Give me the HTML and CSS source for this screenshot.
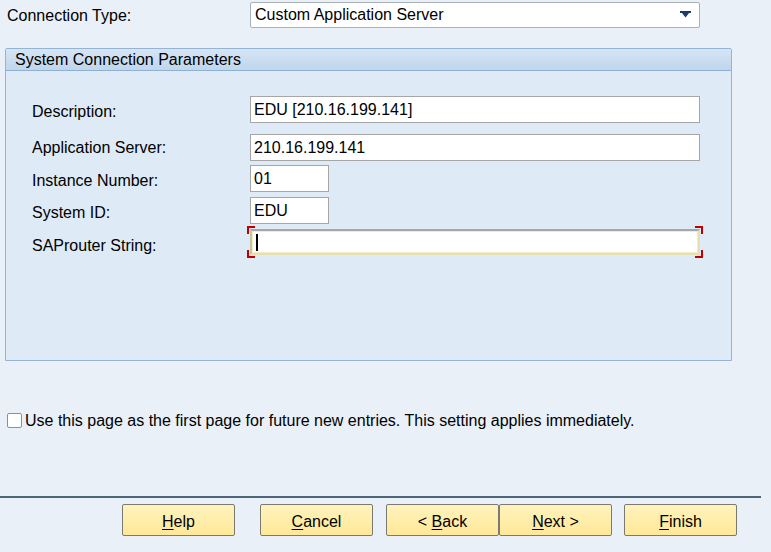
FILE: index.html
```html
<!DOCTYPE html>
<html>
<head>
<meta charset="utf-8">
<link rel="stylesheet" href="styles.css">
</head>
<body>
<div class="page">
  <div class="top-row">
    <span class="top-label">Connection Type:</span>
    <div class="select">
      <span>Custom Application Server</span>
      <svg class="arrow" width="11" height="7" viewBox="0 0 11 7"><path d="M0 0H11V2H9L5.5 6.5L2 2H0Z" fill="#1f3a66"/></svg>
    </div>
  </div>

  <div class="panel">
    <div class="panel-head">System Connection Parameters</div>
    <div class="panel-body">
      <div class="row r1"><span class="lbl down2">Description:</span><div class="field wide">EDU [210.16.199.141]</div></div>
      <div class="row r2"><span class="lbl">Application Server:</span><div class="field wide">210.16.199.141</div></div>
      <div class="row r3"><span class="lbl down2">Instance Number:</span><div class="field short">01</div></div>
      <div class="row r4"><span class="lbl down2">System ID:</span><div class="field short">EDU</div></div>
      <div class="row r5"><span class="lbl down4">SAProuter String:</span>
        <div class="focus-wrap">
          <div class="field wide focused"><span class="caret"></span></div>
          <span class="br tl"></span><span class="br bl"></span><span class="br tr"></span><span class="br brr"></span>
        </div>
      </div>
    </div>
  </div>

  <label class="check-row"><span class="box"></span><span class="check-text">Use this page as the first page for future new entries. This setting applies immediately.</span></label>

  <div class="sep"></div>

  <div class="buttons">
    <div class="btn b-help"><span><u>H</u>elp</span></div>
    <div class="btn b-cancel"><span><u>C</u>ancel</span></div>
    <div class="btn b-back"><span>&lt; <u>B</u>ack</span></div>
    <div class="btn b-next"><span><u>N</u>ext &gt;</span></div>
    <div class="btn b-finish"><span><u>F</u>inish</span></div>
  </div>
</div>
</body>
</html>
```

FILE: styles.css
```css
html, body {
  margin: 0;
  padding: 0;
  background: #e9f0f8;
}
.page {
  width: 771px;
  height: 552px;
  font-family: "Liberation Sans", Arial, sans-serif;
  font-size: 16px;
  color: #000;
  overflow: hidden;
}
.top-row {
  display: flex;
  align-items: center;
  padding: 2px 0 0 7px;
  height: 26px;
}
.top-label {
  width: 243px;
  margin-top: 2px;
}
.select {
  box-sizing: border-box;
  width: 450px;
  height: 26px;
  background: #fff;
  border: 1px solid #a9b0b8;
  border-radius: 2px;
  display: flex;
  align-items: center;
  justify-content: space-between;
  padding: 0 8px 0 4px;
}
.arrow { margin-top: -2px; }

.panel {
  box-sizing: border-box;
  margin: 20px 0 0 5px;
  width: 727px;
  height: 313px;
  border: 1px solid #93b4d4;
  border-radius: 2px 2px 0 0;
  background: #deeaf5;
}
.panel-head {
  height: 21px;
  line-height: 21px;
  padding-left: 9px;
  background: linear-gradient(#d6e5f4, #c0d6ec);
  border-bottom: 1px solid #8fb0d0;
}
.panel-body {
  padding: 25px 0 0 26px;
}
.row {
  display: flex;
  align-items: center;
}
.lbl { width: 218px; }
.down2 { margin-top: 4px; }
.down4 { margin-top: 7px; }
.r2 { margin-top: 11px; }
.r3 { margin-top: 4px; }
.r4 { margin-top: 5px; }
.r5 { margin-top: 5px; }
.field {
  box-sizing: border-box;
  height: 27px;
  background: #fff;
  border: 1px solid #a6a6a6;
  padding: 0 3px;
  display: flex;
  align-items: center;
}
.wide { width: 450px; }
.short { width: 79px; }
.focus-wrap {
  position: relative;
}
.field.focused {
  height: 26px;
  border: 2px solid #e7dfb0;
  border-top-color: #a7a7a7;
  border-left-color: #c8c4a8;
  box-shadow: inset 0 0 0 1px #f2ecc8;
}
.caret {
  display: inline-block;
  width: 2px;
  height: 17px;
  background: #000;
  margin-left: 1px;
}
.br {
  position: absolute;
  width: 6px;
  height: 6px;
  border-color: #c00000;
  border-style: solid;
  border-width: 0;
}
.tl { left: -3px; top: -3px; border-top-width: 2px; border-left-width: 2px; }
.bl { left: -3px; bottom: -3px; border-bottom-width: 2px; border-left-width: 2px; }
.tr { right: -3px; top: -3px; border-top-width: 2px; border-right-width: 2px; }
.brr { right: -3px; bottom: -3px; border-bottom-width: 2px; border-right-width: 2px; }

.check-row {
  display: flex;
  align-items: center;
  margin: 51px 0 0 7px;
  height: 16px;
}
.check-text { margin-top: 2px; }
.box {
  box-sizing: border-box;
  width: 15px;
  height: 15px;
  background: #fff;
  border: 1px solid #8e8f8f;
  border-radius: 2px;
  margin-right: 3px;
}
.sep {
  margin-top: 68px;
  width: 761px;
  height: 2px;
  background: #4f6679;
}
.buttons {
  display: flex;
  margin-top: 6px;
  padding-left: 122px;
}
.btn {
  box-sizing: border-box;
  width: 113px;
  height: 32px;
  border: 1px solid #7a7a72;
  border-radius: 2px;
  background: linear-gradient(#fff3bd, #ffe897);
  display: flex;
  align-items: center;
  justify-content: center;
  padding-top: 3px;
}
.btn u { text-underline-offset: 2px; }
.b-cancel { margin-left: 25px; }
.b-back { margin-left: 13px; }
.b-next { margin-left: 0; }
.b-finish { margin-left: 12px; }
```
